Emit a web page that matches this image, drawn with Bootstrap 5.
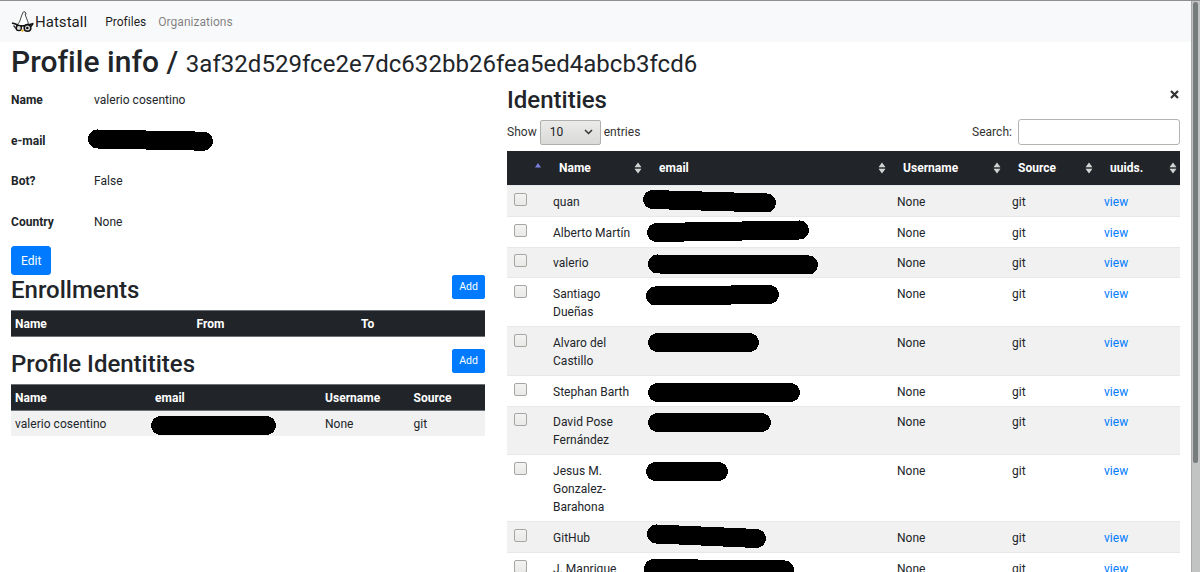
<!DOCTYPE html>
<html lang="en">
<head>
<meta charset="utf-8">
<title>Hatstall</title>
<meta name="viewport" content="width=device-width, initial-scale=1">
<link href="https://cdn.jsdelivr.net/npm/bootstrap@5.3.0/dist/css/bootstrap.min.css" rel="stylesheet">
<style>
  body { font: 12px/18px Roboto, "Liberation Sans", sans-serif; letter-spacing: .03px; color: #212529; background: #fff; height: 572px; }
  .window { height: 572px; border-top: 1px solid #8f8f93; }
  .scroll-track { width: 9px; background: #c1c4c2; border-left: 1px solid #a5a9a8; padding: 1px 2px 0 1px; }
  .scroll-thumb { height: 461px; background: #757c7b; border-radius: 3px; }
  .topbar { height: 41px; background: #f8f9fa; padding: 0 11px; }
  .brand-name { font-size: 15px; color: rgba(0,0,0,.9); margin-left: 1px; }
  .topbar .nav-link { padding: 0; color: rgba(0,0,0,.5); }
  .topbar .nav-link.active { color: rgba(0,0,0,.9); }
  h1 { font-size: 30px; line-height: 36px; font-weight: 500; margin: 2px 11px 0; }
  h1 small { font-size: 24px; font-weight: 400; }
  h2 { font-size: 24px; line-height: 29px; font-weight: 500; margin: 0; letter-spacing: 0; }
  .left-pane { width: 474px; margin: -2px 0 0 11px; }
  .right-pane { width: 673px; margin-left: 22px; padding-top: 4px; }
  .field { height: 40.5px; }
  .field b { width: 83px; }
  b, th { font-weight: 700; }
  .btn-primary { --bs-btn-bg: #007bff; --bs-btn-border-color: #007bff; border-radius: 3px; font-size: 12px; line-height: 18px; padding: 4.5px 9px; }
  .btn-add { font-size: 10.5px; line-height: 15.75px; padding: 3px 6px; width: 33px; height: 24px; border-radius: 2px; }
  .grid-table { table-layout: fixed; width: 100%; border-collapse: separate; border-spacing: 0; }
  .grid-table th { background: #212529; color: #fff; }
  .grid-table td { vertical-align: top; }
  .grid-table tbody tr:nth-child(odd) td { background: #f1f1f1; }
  .mini th { height: 27px; padding: 0 4px; border-top: 1px solid #6c7175; border-bottom: 1px solid #6c7175; }
  .mini td { height: 25px; padding: 4px 4px 3px; }
  .people th { height: 34px; padding: 0 14px; }
  .people td { border-top: 1px solid #e6e9eb; padding: 6.75px 8px 5px; }
  .people a { color: #007bff; text-decoration: none; }
  .sorter { right: 3px; top: 11px; }
  .redact { left: 0; top: 0; overflow: visible; pointer-events: none; z-index: 1; }
  .redact line { stroke: #000; stroke-width: 19; stroke-linecap: round; shape-rendering: crispEdges; }
  .pick { appearance: none; display: block; width: 13px; height: 13px; margin: 0 0 0 -1px; border: 1px solid #a6a6a3; border-radius: 2px; background: linear-gradient(#f3f3f3, #e9e9e8); }
  .tools { height: 26px; margin-top: 4px; color: #333; }
  .length { width: 61px; height: 25px; border: 1px solid #b0b0ad; border-radius: 2px; background: linear-gradient(#ebebea, #d9d9d7); padding: 0 7px 0 9px; margin: 0 3px; color: #222; }
  .search { width: 162px; height: 26px; border: 1px solid #b4b4b4; border-radius: 3px; margin-left: 6px; }
</style>
</head>
<body class="overflow-hidden">
<svg class="d-none">
  <symbol id="sort-both" viewBox="0 0 8 12"><path d="M4 .5 7.3 5H.7zM4 11.5 7.3 7H.7z" fill="#d3d3d3"/><path d="M.7 6h6.6" stroke="#85888a"/></symbol>
</svg>
<div class="window d-flex overflow-hidden">
  <main class="flex-grow-1">
    <nav class="topbar d-flex align-items-center">
      <svg width="23" height="22" viewBox="0 0 23 22">
        <path d="M5.5 14.5 8.5 11 10.5 5 12 1.2 14 .8 15.2 3 14 3.2 17.5 12.5 13 14.5z" fill="#fff" stroke="#333" stroke-width=".9"/>
        <path d="M1 12 4.500 13 9 15.200 15 14.500 22.500 12.500" fill="none" stroke="#111" stroke-width="1.6"/>
        <path d="M2.500 14.500 5 17.500" stroke="#333" stroke-width="1.200"/>
        <circle cx="7.800" cy="17" r="2.600" fill="#ddd" stroke="#111" stroke-width="1.400"/>
        <circle cx="16.500" cy="17" r="3.300" fill="#ddd" stroke="#111" stroke-width="1.600"/><circle cx="16.300" cy="17" r="1.300" fill="#111"/>
        <path d="M20 15.500 21.800 13" stroke="#111" stroke-width="1.300"/>
        <path d="m9.500 18.500 3.500.5-1.600 2.300z" fill="#f5a623"/>
      </svg>
      <span class="brand-name">Hatstall</span>
      <a class="nav-link active" style="margin-left:18px" href="#">Profiles</a>
      <a class="nav-link" style="margin-left:12px" href="#">Organizations</a>
    </nav>
    <h1>Profile info / <small>3af32d529fce2e7dc632bb26fea5ed4abcb3fcd6</small></h1>
    <div class="d-flex">
      <section class="left-pane">
        <div class="field d-flex align-items-center"><b>Name</b><span>valerio cosentino</span></div>
        <div class="field d-flex align-items-center"><b>e-mail</b><span class="position-relative"><svg class="redact position-absolute" width="1" height="1"><line x1="3.5" y1="-2" x2="109.5" y2=".2"/></svg></span></div>
        <div class="field d-flex align-items-center"><b>Bot?</b><span>False</span></div>
        <div class="field d-flex align-items-center"><b>Country</b><span>None</span></div>
        <div style="padding-top:4px"><button class="btn btn-primary d-block">Edit</button></div>
        <div class="d-flex justify-content-between" style="height:35px"><h2 style="padding-top:1px">Enrollments</h2><button class="btn btn-primary btn-add">Add</button></div>
        <table class="grid-table mini">
          <colgroup><col style="width:181.5px"><col style="width:164.5px"><col></colgroup>
          <thead><tr><th>Name</th><th>From</th><th>To</th></tr></thead>
        </table>
        <div class="d-flex justify-content-between" style="height:47px;padding-top:12px"><h2 style="padding-top:1px">Profile Identitites</h2><button class="btn btn-primary btn-add">Add</button></div>
        <table class="grid-table mini">
          <colgroup><col style="width:140px"><col style="width:170px"><col style="width:88.5px"><col></colgroup>
          <thead><tr><th>Name</th><th>email</th><th>Username</th><th>Source</th></tr></thead>
          <tbody><tr><td>valerio cosentino</td><td class="position-relative"><svg class="redact position-absolute" width="1" height="1"><line x1="9.5" y1="14.5" x2="115.5" y2="14.5"/></svg></td><td>None</td><td>git</td></tr></tbody>
        </table>
      </section>
      <section class="right-pane">
        <div class="d-flex justify-content-between"><h2>Identities</h2>
          <svg width="9" height="9" viewBox="0 0 9 9" style="margin:4px 1px 0 0"><path d="m1 1 7 7M8 1 1 8" stroke="#333" stroke-width="2.2"/></svg></div>
        <div class="tools d-flex align-items-center">
          <span>Show</span>
          <span class="length d-flex align-items-center justify-content-between">10<svg width="9" height="6" viewBox="0 0 9 6"><path d="m1 1 3.5 3.5L8 1" fill="none" stroke="#333" stroke-width="1.5"/></svg></span>
          <span>entries</span>
          <span class="ms-auto">Search:</span><input class="search" aria-label="Search">
        </div>
        <table class="grid-table people" style="margin-top:6px">
          <colgroup><col style="width:38px"><col style="width:100px"><col style="width:244px"><col style="width:115px"><col style="width:92px"><col></colgroup>
          <thead><tr>
            <th class="position-relative"><svg class="sorter position-absolute" width="8" height="12"><path d="M4 1 7 5.5H1z" fill="#7b7fe0"/></svg></th>
            <th class="position-relative">Name<svg class="sorter position-absolute" width="8" height="12"><use href="#sort-both"/></svg></th>
            <th class="position-relative">email<svg class="sorter position-absolute" width="8" height="12"><use href="#sort-both"/></svg></th>
            <th class="position-relative">Username<svg class="sorter position-absolute" width="8" height="12"><use href="#sort-both"/></svg></th>
            <th class="position-relative">Source<svg class="sorter position-absolute" width="8" height="12"><use href="#sort-both"/></svg></th>
            <th class="position-relative">uuids.<svg class="sorter position-absolute" width="8" height="12"><use href="#sort-both"/></svg></th>
          </tr></thead>
          <tbody>
            <tr><td><input type="checkbox" class="pick"></td><td>quan</td><td class="position-relative"><svg class="redact position-absolute" width="1" height="1"><line x1="7.5" y1="13.5" x2="121.5" y2="17"/></svg></td><td>None</td><td>git</td><td><a href="#">view</a></td></tr>
            <tr><td><input type="checkbox" class="pick"></td><td>Alberto Martín</td><td class="position-relative"><svg class="redact position-absolute" width="1" height="1"><line x1="11.5" y1="15.5" x2="154.5" y2="13"/></svg></td><td>None</td><td>git</td><td><a href="#">view</a></td></tr>
            <tr><td><input type="checkbox" class="pick"></td><td>valerio</td><td class="position-relative"><svg class="redact position-absolute" width="1" height="1"><line x1="12.5" y1="16" x2="163.5" y2="17"/></svg></td><td>None</td><td>git</td><td><a href="#">view</a></td></tr>
            <tr><td><input type="checkbox" class="pick"></td><td>Santiago Dueñas</td><td class="position-relative"><svg class="redact position-absolute" width="1" height="1"><line x1="10.5" y1="18" x2="124.5" y2="16.5"/></svg></td><td>None</td><td>git</td><td><a href="#">view</a></td></tr>
            <tr><td><input type="checkbox" class="pick"></td><td>Alvaro del Castillo</td><td class="position-relative"><svg class="redact position-absolute" width="1" height="1"><line x1="12.5" y1="15.5" x2="104.5" y2="15.5"/></svg></td><td>None</td><td>git</td><td><a href="#">view</a></td></tr>
            <tr><td><input type="checkbox" class="pick"></td><td>Stephan Barth</td><td class="position-relative"><svg class="redact position-absolute" width="1" height="1"><line x1="12.5" y1="16.5" x2="145.5" y2="16.5"/></svg></td><td>None</td><td>git</td><td><a href="#">view</a></td></tr>
            <tr><td><input type="checkbox" class="pick"></td><td>David Pose Fernández</td><td class="position-relative"><svg class="redact position-absolute" width="1" height="1"><line x1="12.5" y1="15.5" x2="116.5" y2="15.5"/></svg></td><td>None</td><td>git</td><td><a href="#">view</a></td></tr>
            <tr><td><input type="checkbox" class="pick"></td><td>Jesus M. Gonzalez-Barahona</td><td class="position-relative"><svg class="redact position-absolute" width="1" height="1"><line x1="10.5" y1="16.5" x2="73.5" y2="16.5"/></svg></td><td>None</td><td>git</td><td><a href="#">view</a></td></tr>
            <tr><td><input type="checkbox" class="pick"></td><td>GitHub</td><td class="position-relative"><svg class="redact position-absolute" width="1" height="1"><line x1="11.5" y1="12" x2="111.5" y2="16.5"/></svg></td><td>None</td><td>git</td><td><a href="#">view</a></td></tr>
            <tr><td><input type="checkbox" class="pick"></td><td>J. Manrique</td><td class="position-relative"><svg class="redact position-absolute" width="1" height="1"><line x1="8.5" y1="15.5" x2="139.5" y2="17"/></svg></td><td>None</td><td>git</td><td><a href="#">view</a></td></tr>
          </tbody>
        </table>
      </section>
    </div>
  </main>
  <div class="scroll-track"><div class="scroll-thumb"></div></div>
</div>
<script src="https://cdn.jsdelivr.net/npm/bootstrap@5.3.0/dist/js/bootstrap.bundle.min.js"></script>
</body>
</html>
